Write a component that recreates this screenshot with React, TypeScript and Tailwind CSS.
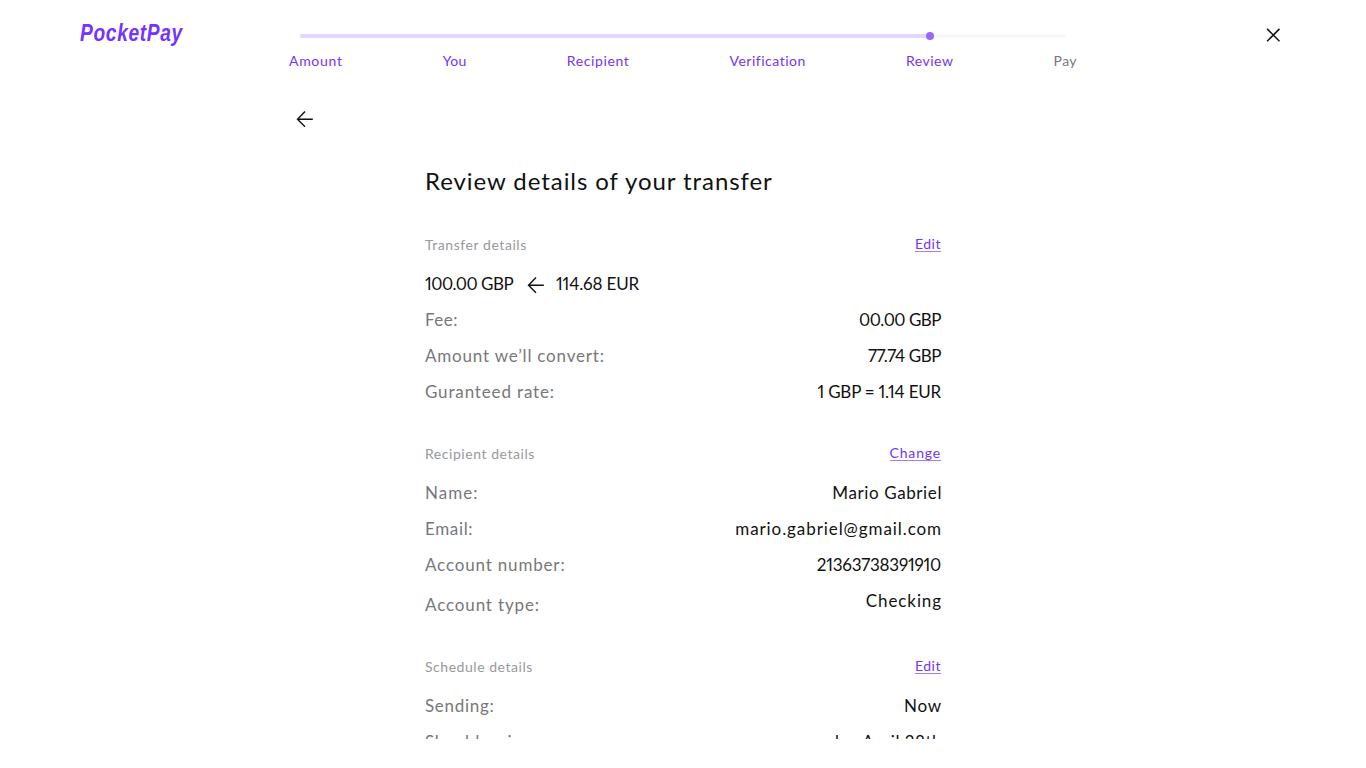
type Item = { text: string; tracking: string };

const steps: Item[] = [
  { text: "Amount", tracking: "tracking-[0.7px]" },
  { text: "You", tracking: "tracking-[0.3px]" },
  { text: "Recipient", tracking: "tracking-[0.6px]" },
  { text: "Verification", tracking: "tracking-[0.5px]" },
  { text: "Review", tracking: "tracking-[0.5px]" },
  { text: "Pay", tracking: "tracking-[0.4px]" },
];

function ArrowLeft() {
  return (
    <svg width="18" height="18" viewBox="0 0 18 18" fill="none" stroke="#111" strokeWidth="1.4">
      <path d="M9 1.5 1.5 9.2 9 16.7M1.5 9.2H16.8" />
    </svg>
  );
}

function Header({ title, tracking, action, actionTracking }: { title: string; tracking: string; action: string; actionTracking: string }) {
  return (
    <div className="flex h-7 items-start justify-between text-sm leading-5">
      <h2 className={`mt-px text-[#98989d] ${tracking}`}>{title}</h2>
      <a href="#" className={`h-[18px] border-b border-[#a57bff] text-[#7433ff] ${actionTracking}`}>{action}</a>
    </div>
  );
}

function Row({ label, value, low = false }: { label: Item; value: Item; low?: boolean }) {
  return (
    <div className={`flex justify-between text-[17px] leading-9 ${low ? "h-10" : "h-9"}`}>
      <span className={`text-[#77777b] ${low ? "pt-1" : ""} ${label.tracking}`}>{label.text}</span>
      <span className={`text-[#111] proportional-nums ${value.tracking}`}>{value.text}</span>
    </div>
  );
}

export default function App() {
  return (
    <div className="h-[768px] w-[1366px] overflow-hidden bg-white font-['Lato',sans-serif] text-[#111]">
      <header className="flex h-[92px] items-start pl-20">
        <div className="w-[209px] pt-[19px]">
          <div className="w-32 origin-left scale-x-[0.8] font-['Liberation_Sans',sans-serif] text-2xl leading-7 font-bold tracking-[0.8px] text-[#7433ff] italic">PocketPay</div>
        </div>
        <nav className="w-[788px] pt-[34px]">
          <div className="ml-[11px] flex h-1 w-[766px] items-center rounded-full bg-[#f8f8f8]">
            <div className="h-1 w-[626px] rounded-l-full bg-[#e5d6ff]" />
            <div className="size-2 rounded-full bg-[#9966ff]" />
          </div>
          <ol className="mt-[13px] flex justify-between text-sm leading-5 text-[#7433ff]">
            {steps.map((s, i) => (
              <li key={s.text} className={`${s.tracking} ${i === 5 ? "text-[#77777b]" : ""}`}>{s.text}</li>
            ))}
          </ol>
        </nav>
        <button className="mt-7 ml-[189px]" aria-label="Close">
          <svg width="14" height="14" viewBox="0 0 14 14" fill="none" stroke="#111" strokeWidth="1.5">
            <path d="m1.1.9 12.4 12.4M13.5.9 1.1 13.3" />
          </svg>
        </button>
      </header>
      <button className="mt-[18px] ml-[296px] block" aria-label="Back"><ArrowLeft /></button>
      <main className="mt-[37px] ml-[425px] h-[574px] w-[517px] overflow-hidden pr-px">
        <h1 className="text-2xl leading-8 tracking-[0.93px]">Review details of your transfer</h1>
        <section className="mt-[37px] h-[209px]">
          <Header title="Transfer details" tracking="tracking-[0.56px]" action="Edit" actionTracking="tracking-[0.5px]" />
          <div className="mt-1 flex h-9 items-center text-[17px] leading-9 proportional-nums">
            <span className="w-[102px] tracking-[-0.5px]">100.00 GBP</span>
            <div className="pt-0.5"><ArrowLeft /></div>
            <span className="ml-[11px] tracking-[-0.15px]">114.68 EUR</span>
          </div>
          <Row label={{ text: "Fee:", tracking: "tracking-[0.5px]" }} value={{ text: "00.00 GBP", tracking: "tracking-[-0.5px]" }} />
          <Row label={{ text: "Amount we’ll convert:", tracking: "tracking-[0.8px]" }} value={{ text: "77.74 GBP", tracking: "tracking-[-0.45px]" }} />
          <Row label={{ text: "Guranteed rate:", tracking: "tracking-[0.85px]" }} value={{ text: "1 GBP = 1.14 EUR", tracking: "tracking-[-0.22px]" }} />
        </section>
        <section className="h-[213px]">
          <Header title="Recipient details" tracking="tracking-[0.55px]" action="Change" actionTracking="tracking-[0.83px]" />
          <div className="mt-1">
            <Row label={{ text: "Name:", tracking: "tracking-[1px]" }} value={{ text: "Mario Gabriel", tracking: "tracking-[0.6px] -mr-px" }} />
            <Row label={{ text: "Email:", tracking: "tracking-[0.65px]" }} value={{ text: "mario.gabriel@gmail.com", tracking: "tracking-[0.92px] -mr-px" }} />
            <Row label={{ text: "Account number:", tracking: "tracking-[0.83px]" }} value={{ text: "21363738391910", tracking: "tracking-[-0.23px]" }} />
            <Row low label={{ text: "Account type:", tracking: "tracking-[0.86px]" }} value={{ text: "Checking", tracking: "tracking-[0.9px] -mr-px" }} />
          </div>
        </section>
        <section>
          <Header title="Schedule details" tracking="tracking-[0.54px]" action="Edit" actionTracking="tracking-[0.5px]" />
          <div className="mt-1">
            <Row label={{ text: "Sending:", tracking: "tracking-[0.7px]" }} value={{ text: "Now", tracking: "tracking-[0.8px] -mr-px" }} />
            <Row label={{ text: "Should arrive:", tracking: "tracking-[0.6px]" }} value={{ text: "by, April 28th", tracking: "tracking-[0.5px] -mr-px" }} />
          </div>
        </section>
      </main>
    </div>
  );
}
